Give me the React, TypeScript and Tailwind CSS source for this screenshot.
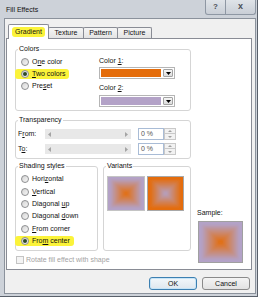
import type { ReactNode } from 'react'

const ORANGE = '#e46c0a'
const LAVENDER = '#b3a2c7'

function Radio({ checked }: { checked?: boolean }) {
  return (
    <span className="flex h-[8px] w-[8px] shrink-0 items-center justify-center rounded-full border border-[#8e8f91] bg-[linear-gradient(135deg,#d4d4d4,#f7f7f7)]">
      {checked && <span className="h-[4px] w-[4px] rounded-full bg-[#2f4a25]" />}
    </span>
  )
}

function Group({ label, className, children }: { label: string; className: string; children?: ReactNode }) {
  return (
    <div className={`relative rounded-[3px] border border-[#d5d5d5] ${className}`}>
      <span className="absolute left-[2px] top-[-5px] bg-white px-px leading-[8px]">{label}</span>
      {children}
    </div>
  )
}

function RadioRow({ children, checked, hl, h = 'h-[12px]' }: { children: ReactNode; checked?: boolean; hl?: boolean; h?: string }) {
  return (
    <div className={`flex items-center ${h}`}>
      <span className={hl ? 'flex h-[10px] items-center gap-[3px] rounded-[3px] bg-[#fbf33a] pr-[4px] -ml-[6px] pl-[6px]' : 'flex items-center gap-[3px]'}>
        <Radio checked={checked} />
        <span className="leading-[8px]">{children}</span>
      </span>
    </div>
  )
}

// square "from center" fill: horizontal ramps for the halves, vertical ramps
// in the top/bottom triangles, softened a little so the diagonals don't crease
function BoxGradient({ id, outer, inner }: { id: string; outer: string; inner: string }) {
  const stops = (
    <>
      <stop offset="0" stopColor={outer} />
      <stop offset="0.12" stopColor={outer} />
      <stop offset="1" stopColor={inner} />
    </>
  )
  return (
    <svg width="100%" height="100%" viewBox="0 0 100 100" preserveAspectRatio="none" className="block">
      <defs>
        <linearGradient id={`${id}t`} x1="0" y1="0" x2="0" y2="50" gradientUnits="userSpaceOnUse">{stops}</linearGradient>
        <linearGradient id={`${id}b`} x1="0" y1="100" x2="0" y2="50" gradientUnits="userSpaceOnUse">{stops}</linearGradient>
        <linearGradient id={`${id}l`} x1="0" y1="0" x2="50" y2="0" gradientUnits="userSpaceOnUse">{stops}</linearGradient>
        <linearGradient id={`${id}r`} x1="100" y1="0" x2="50" y2="0" gradientUnits="userSpaceOnUse">{stops}</linearGradient>
        <filter id={`${id}f`} x="-0.3" y="-0.3" width="1.6" height="1.6">
          <feGaussianBlur stdDeviation="3" />
        </filter>
      </defs>
      <g filter={`url(#${id}f)`}>
        <rect x="-25" y="-25" width="150" height="150" fill={outer} />
        <rect width="51" height="100" fill={`url(#${id}l)`} />
        <rect x="50" width="50" height="100" fill={`url(#${id}r)`} />
        <path d="M0 0H100L50 50z" fill={`url(#${id}t)`} />
        <path d="M0 100H100L50 50z" fill={`url(#${id}b)`} />
      </g>
    </svg>
  )
}

function Dropdown({ color }: { color: string }) {
  return (
    <div className="flex h-[12px] w-[76px] items-stretch gap-[2px] border border-[#b5b5b5] bg-white p-px">
      <div className="w-[60px]" style={{ background: color }} />
      <div className="flex w-[10px] items-center justify-center rounded-[1px] border border-[#a3a3a3] bg-[linear-gradient(#f6f6f6,#dcdcdc)]">
        <svg width="5" height="3" viewBox="0 0 5 3"><path d="M0 0h5L2.5 3z" fill="#000" /></svg>
      </div>
    </div>
  )
}

function SliderRow({ label }: { label: ReactNode }) {
  return (
    <div className="flex h-[12px] items-center pl-[2px]">
      <span className="w-[27px] leading-[8px]">{label}</span>
      <div className="flex h-[10px] w-[86px] items-center justify-between bg-[#e8e8e8] px-[3px]">
        <svg width="3" height="5" viewBox="0 0 3 5"><path d="M3 0v5L0 2.5z" fill="#a4a4a4" /></svg>
        <svg width="3" height="5" viewBox="0 0 3 5"><path d="M0 0v5l3-2.5z" fill="#a4a4a4" /></svg>
      </div>
      <div className="ml-[7px] flex h-[12px] w-[26px] items-center border border-[#a9bcd6] bg-white pl-[2px] leading-[8px] text-[#555]">
        0 %
      </div>
      <div className="flex h-[12px] w-[12px] flex-col">
        <div className="flex h-[6px] items-center justify-center border border-[#c9c9c9] bg-[#f2f2f2]">
          <svg width="4" height="2" viewBox="0 0 4 2"><path d="M0 2h4L2 0z" fill="#a0a0a0" /></svg>
        </div>
        <div className="flex h-[6px] items-center justify-center border border-t-0 border-[#c9c9c9] bg-[#f2f2f2]">
          <svg width="4" height="2" viewBox="0 0 4 2"><path d="M0 0h4L2 2z" fill="#a0a0a0" /></svg>
        </div>
      </div>
    </div>
  )
}

export default function App() {
  return (
    <div className="h-[300px] w-[260px] overflow-hidden bg-white font-['Liberation_Sans',Arial,sans-serif] text-[7px] text-[#111]">
      <div className="flex h-[297px] w-[258px] flex-col border-b border-r border-[#59606a] bg-[#cdd2d9]">
        {/* title bar */}
        <div className="flex h-[18px] items-start justify-between">
          <span className="pl-[6px] pt-[6px] leading-[8px]">Fill Effects</span>
          <div className="mr-px flex h-[15px]">
            <div className="flex w-[21px] items-center justify-center rounded-bl-[3px] border border-t-0 border-[#8e97a3] bg-[linear-gradient(#dfe3e8,#c9ced6)] text-[8px] font-bold text-[#4a4f57]">
              ?
            </div>
            <div className="flex w-[30px] items-center justify-center rounded-br-[3px] border border-l-0 border-t-0 border-[#8e97a3] bg-[linear-gradient(#dfe3e8,#c9ced6)] text-[9px] font-bold text-[#4a4f57]">
              x
            </div>
          </div>
        </div>

        {/* client area */}
        <div className="ml-[4px] flex h-[276px] w-[252px] flex-col border border-[#8b929c] bg-[#f0f0f0]">
          {/* tabs */}
          <div className="mt-[5px] flex h-[14px] items-end pl-[3px]">
            <div className="relative z-10 -mb-px flex h-[15px] w-[41px] items-center justify-center rounded-t-[2px] border border-b-0 border-[#898c95] bg-white">
              <span className="rounded-[3px] bg-[#fbf33a] px-[3px] leading-[10px]">Gradient</span>
            </div>
            {['Texture', 'Pattern', 'Picture'].map((t, i) => (
              <div
                key={t}
                className={`-ml-px flex h-[11px] items-center justify-center rounded-t-[2px] border border-b-0 border-[#898c95] bg-[linear-gradient(#f5f5f5,#e3e3e3)] leading-[8px] ${i === 0 ? 'w-[36px]' : 'w-[35px]'}`}
              >
                {t}
              </div>
            ))}
          </div>

          {/* panel */}
          <div className="ml-px flex h-[232px] w-[246px] border border-[#898c95] bg-white">
            <div className="w-[184px] pl-[8px] pt-[10px]">
              <Group label="Colors" className="h-[62px] w-[176px]">
                <div className="flex">
                  <div className="w-[83px] pl-[5px] pt-[6px]">
                    <RadioRow>O<u>n</u>e color</RadioRow>
                    <RadioRow checked hl><u>T</u>wo colors</RadioRow>
                    <RadioRow>Pre<u>s</u>et</RadioRow>
                  </div>
                  <div className="pt-[7px]">
                    <div className="leading-[8px]">Color <u>1</u>:</div>
                    <div className="mt-[2px]"><Dropdown color={ORANGE} /></div>
                    <div className="mt-[5px] leading-[8px]">Color <u>2</u>:</div>
                    <div className="mt-[3px]"><Dropdown color={LAVENDER} /></div>
                  </div>
                </div>
              </Group>

              <Group label="Transparency" className="mt-[9px] h-[39px] w-[176px]">
                <div className="flex flex-col gap-[3px] pt-[7px]">
                  <SliderRow label={<>F<u>r</u>om:</>} />
                  <SliderRow label={<>T<u>o</u>:</>} />
                </div>
              </Group>

              <div className="mt-[7px] flex h-[85px] gap-[5px]">
                <Group label="Shading styles" className="h-[85px] w-[83px]">
                  <div className="pl-[5px] pt-[6px]">
                    <RadioRow h="h-[12.4px]">Hori<u>z</u>ontal</RadioRow>
                    <RadioRow h="h-[12.4px]"><u>V</u>ertical</RadioRow>
                    <RadioRow h="h-[12.4px]">Diagonal <u>u</u>p</RadioRow>
                    <RadioRow h="h-[12.4px]">Diagonal <u>d</u>own</RadioRow>
                    <RadioRow h="h-[12.4px]"><u>F</u>rom corner</RadioRow>
                    <RadioRow h="h-[12.4px]" checked hl>Fro<u>m</u> center</RadioRow>
                  </div>
                </Group>
                <Group label="Variants" className="h-[85px] w-[88px]">
                  <div className="flex gap-[2px] pl-[3px] pt-[9px]">
                    <div className="h-[35px] w-[38px] border border-[#c4c4c4]">
                      <BoxGradient id="v1" outer={LAVENDER} inner={ORANGE} />
                    </div>
                    <div className="h-[35px] w-[37px] border border-[#a8a8a8]">
                      <BoxGradient id="v2" outer={ORANGE} inner={LAVENDER} />
                    </div>
                  </div>
                </Group>
              </div>

              <div className="mt-[4px] flex h-[9px] items-center gap-[2px] pl-px text-[#a3a3a3]">
                <span className="h-[8px] w-[8px] border border-[#c4c4c4] bg-[#f4f4f4]" />
                <span className="leading-[8px]">Rotate fill effect with shape</span>
              </div>
            </div>

            <div className="pl-[6px] pt-[170px]">
              <div className="leading-[8px]">Sample:</div>
              <div className="ml-px mt-[4px] h-[42px] w-[45px] border border-[#a0a0a0]">
                <BoxGradient id="s" outer={LAVENDER} inner={ORANGE} />
              </div>
            </div>
          </div>

          {/* buttons */}
          <div className="mt-[7px] flex justify-end gap-[5px] pr-[5px]">
            <button className="flex h-[13px] w-[48px] items-center justify-center rounded-[3px] border border-[#3c7fb1] bg-[linear-gradient(#f2f7fb,#dfe7ee)] leading-[8px] shadow-[inset_0_0_0_1px_#c6e4f7]">
              OK
            </button>
            <button className="flex h-[13px] w-[48px] items-center justify-center rounded-[3px] border border-[#8a8a8a] bg-[linear-gradient(#f4f4f4,#e2e2e2)] leading-[8px]">
              Cancel
            </button>
          </div>
        </div>
      </div>
    </div>
  )
}
